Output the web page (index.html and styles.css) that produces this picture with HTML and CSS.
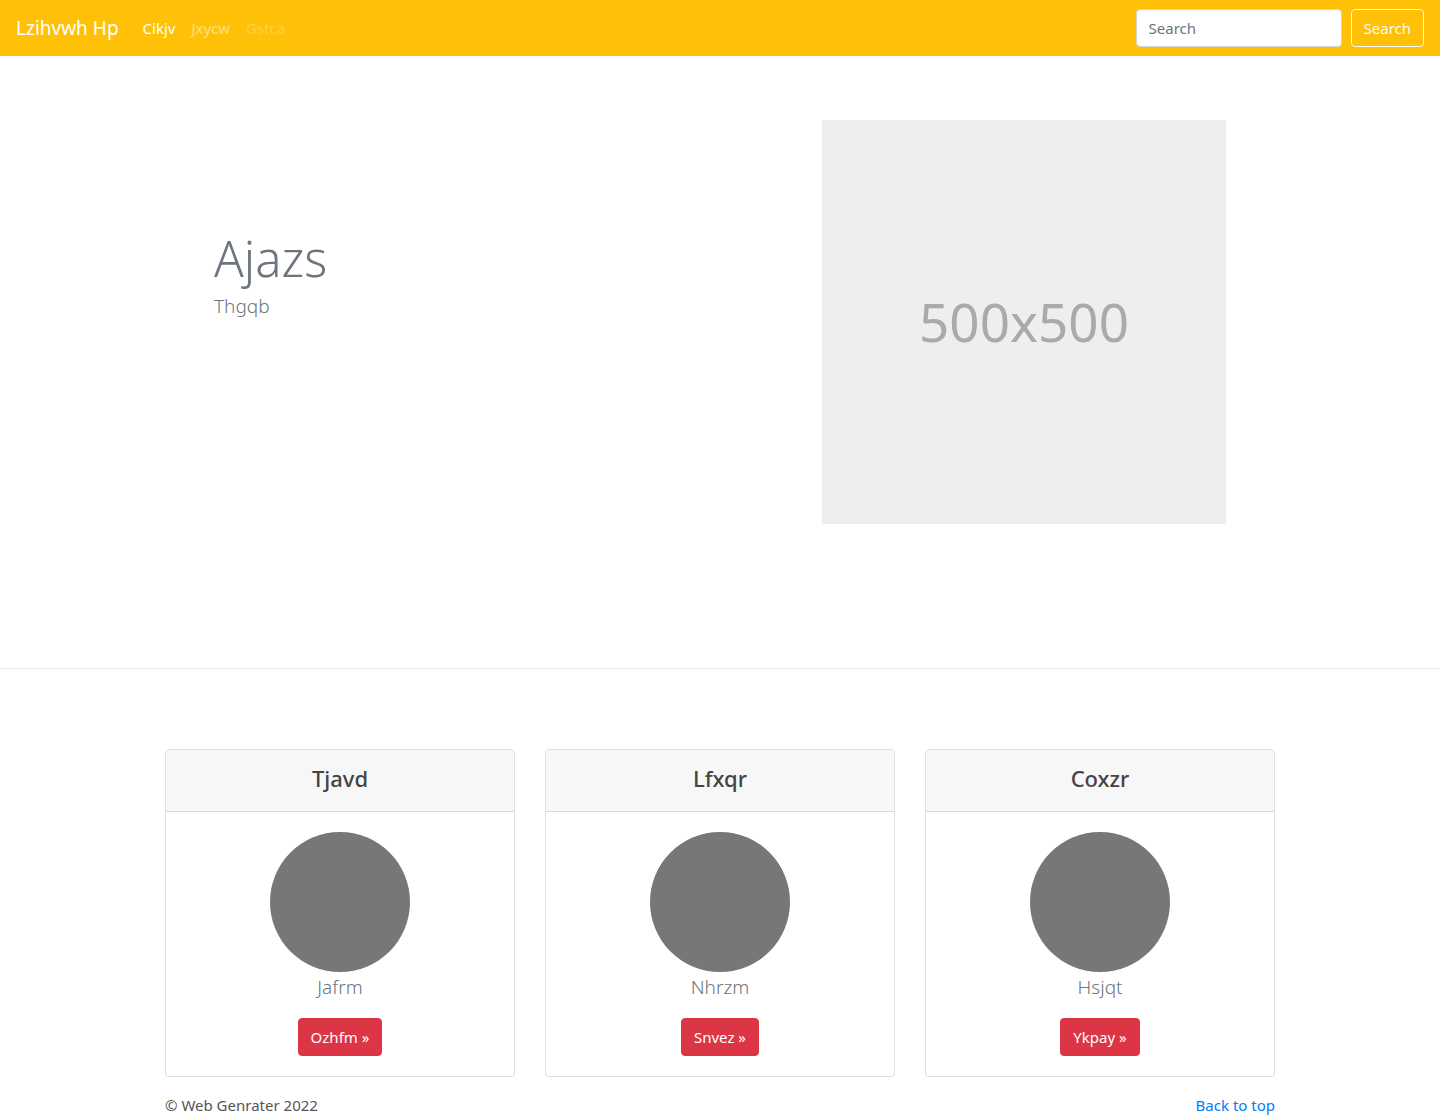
FILE: index.html
```html
<!DOCTYPE html>
<html lang="en">
<head>
<meta charset="utf-8">
<title>Lzihvwh Hp</title>
<link rel="stylesheet" href="styles.css">
</head>
<body>
<nav class="navbar">
  <a class="brand" href="#">Lzihvwh Hp</a>
  <ul class="nav">
    <li><a class="nav-link active" href="#">Cikjv</a></li>
    <li><a class="nav-link" href="#">Jxycw</a></li>
    <li><a class="nav-link disabled" href="#">Gstca</a></li>
  </ul>
  <form class="search">
    <input class="search-input" type="text" placeholder="Search">
    <button class="search-btn" type="button">Search</button>
  </form>
</nav>

<section class="hero">
  <div class="hero-text">
    <h1 class="display">Ajazs</h1>
    <p class="lead">Thgqb</p>
  </div>
  <div class="placeholder">500x500</div>
</section>

<hr class="divider">

<main class="container">
  <div class="cards">
    <div class="card">
      <div class="card-header"><h3>Tjavd</h3></div>
      <div class="card-body">
        <div class="avatar"></div>
        <p class="name">Jafrm</p>
        <a class="btn-danger" href="#">Ozhfm »</a>
      </div>
    </div>
    <div class="card">
      <div class="card-header"><h3>Lfxqr</h3></div>
      <div class="card-body">
        <div class="avatar"></div>
        <p class="name">Nhrzm</p>
        <a class="btn-danger" href="#">Snvez »</a>
      </div>
    </div>
    <div class="card">
      <div class="card-header"><h3>Coxzr</h3></div>
      <div class="card-body">
        <div class="avatar"></div>
        <p class="name">Hsjqt</p>
        <a class="btn-danger" href="#">Ykpay »</a>
      </div>
    </div>
  </div>
  <footer class="footer">
    <span>© Web Genrater 2022</span>
    <a href="#">Back to top</a>
  </footer>
</main>
</body>
</html>
```

FILE: styles.css
```css
* { box-sizing: border-box; }
body {
  margin: 0;
  font-family: "Noto Sans", "Open Sans", sans-serif;
  font-size: 16px;
  line-height: 1.5;
  color: #212529;
  background: #fff;
}
a { text-decoration: none; }

.navbar {
  display: flex;
  align-items: center;
  height: 56px;
  padding: 0 16px;
  background: #ffc107;
}
.brand {
  color: #fff;
  font-size: 19px;
  line-height: 30px;
  margin-right: 16px;
}
.nav {
  display: flex;
  list-style: none;
  margin: 0;
  padding: 0;
  flex: 1;
}
.nav-link {
  display: block;
  padding: 8px 8px;
  color: rgba(255,255,255,.5);
  font-size: 15px;
}
.nav-link.active { color: #fff; }
.nav-link.disabled { color: rgba(255,255,255,.25); }

.search { display: flex; align-items: center; }
.search-input {
  width: 206px;
  height: 38px;
  padding: 6px 12px;
  font: inherit;
  font-size: 15px;
  color: #495057;
  border: 1px solid #ced4da;
  border-radius: 4px;
  background: #fff;
  margin-right: 9px;
}
.search-input::placeholder { color: #6c757d; }
.search-btn {
  height: 38px;
  padding: 0 12px;
  font: inherit;
  font-size: 15px;
  color: #f8f9fa;
  background: transparent;
  border: 1px solid #f8f9fa;
  border-radius: 4px;
}

.hero {
  display: grid;
  grid-template-columns: 822px 404px;
  padding-top: 64px;
  height: 612px;
}
.hero-text {
  padding-left: 214px;
  padding-top: 108px;
}
.display {
  margin: 0;
  font-size: 49px;
  font-weight: 300;
  line-height: 60px;
  color: #6c757d;
}
.lead {
  margin: 4px 0 0;
  font-size: 19px;
  font-weight: 300;
  line-height: 28px;
  color: #6c757d;
}
.placeholder {
  width: 404px;
  height: 404px;
  background: #eee;
  color: #aaa;
  font-size: 53px;
  display: flex;
  align-items: center;
  justify-content: center;
}

.divider {
  margin: 0;
  border: 0;
  border-top: 1px solid rgba(0,0,0,.1);
}

.container {
  width: 1110px;
  margin: 0 auto;
  padding-top: 80px;
}
.cards {
  display: grid;
  grid-template-columns: repeat(3, 350px);
  gap: 30px;
}
.card {
  border: 1px solid rgba(0,0,0,.125);
  border-radius: 4px;
  overflow: hidden;
  text-align: center;
}
.card-header {
  background: #f7f7f7;
  border-bottom: 1px solid rgba(0,0,0,.125);
  height: 62px;
  display: flex;
  align-items: center;
  justify-content: center;
  padding-bottom: 5px;
}
.card-header h3 {
  margin: 0;
  font-size: 22px;
  font-weight: 500;
  line-height: 1.2;
  color: #444;
}
.card-body {
  padding: 20px;
  display: flex;
  flex-direction: column;
  align-items: center;
}
.avatar {
  width: 140px;
  height: 140px;
  border-radius: 50%;
  background: #777;
}
.name {
  margin: 0 0 16px;
  font-size: 19px;
  font-weight: 300;
  line-height: 30px;
  color: #6c757d;
}
.btn-danger {
  display: inline-block;
  height: 38px;
  line-height: 36px;
  padding: 0 12px;
  color: #fff;
  background: #dc3545;
  border: 1px solid #dc3545;
  border-radius: 4px;
  font-size: 15px;
}

.footer {
  display: flex;
  justify-content: space-between;
  padding-top: 17px;
  padding-bottom: 8px;
  color: #555;
  font-size: 15px;
}
.footer a { color: #007bff; }
```
